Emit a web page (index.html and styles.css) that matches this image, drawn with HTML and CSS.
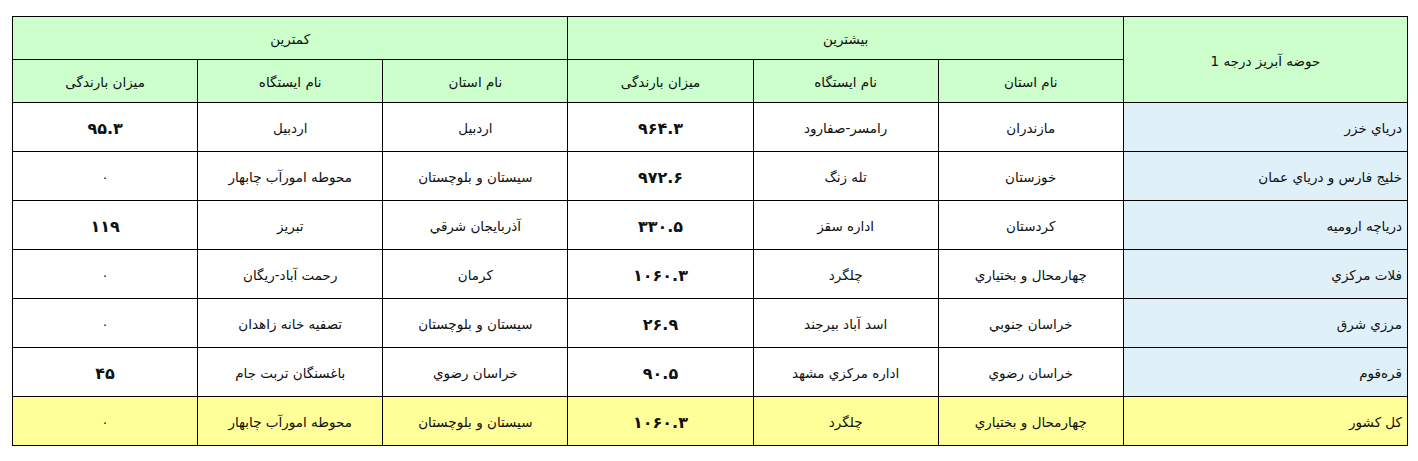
FILE: index.html
```html
<!DOCTYPE html>
<html lang="fa" dir="rtl">
<head>
<meta charset="utf-8">
<title>بارندگی</title>
<link rel="stylesheet" href="styles.css">
</head>
<body>
<table class="rain">
  <colgroup>
    <col class="c-basin">
    <col class="c-std"><col class="c-std"><col class="c-std">
    <col class="c-std"><col class="c-std"><col class="c-std">
  </colgroup>
  <thead>
    <tr class="h1">
      <th rowspan="2" class="basin-head">حوضه آبریز درجه 1</th>
      <th colspan="3">بیشترین</th>
      <th colspan="3">کمترین</th>
    </tr>
    <tr class="h2">
      <th>نام استان</th>
      <th>نام ایستگاه</th>
      <th>میزان بارندگی</th>
      <th>نام استان</th>
      <th>نام ایستگاه</th>
      <th>میزان بارندگی</th>
    </tr>
  </thead>
  <tbody>
    <tr>
      <td class="basin">درياي خزر</td>
      <td>مازندران</td><td>رامسر-صفارود</td><td class="num">۹۶۴.۳</td>
      <td>اردبیل</td><td>اردبیل</td><td class="num">۹۵.۳</td>
    </tr>
    <tr>
      <td class="basin">خلیج فارس و درياي عمان</td>
      <td>خوزستان</td><td>تله زنگ</td><td class="num">۹۷۲.۶</td>
      <td>سیستان و بلوچستان</td><td>محوطه امورآب چابهار</td><td class="zero">۰</td>
    </tr>
    <tr>
      <td class="basin">درياچه ارومیه</td>
      <td>کردستان</td><td>اداره سقز</td><td class="num">۳۳۰.۵</td>
      <td>آذربایجان شرقي</td><td>تبریز</td><td class="num">۱۱۹</td>
    </tr>
    <tr>
      <td class="basin">فلات مرکزي</td>
      <td>چهارمحال و بختیاري</td><td>چلگرد</td><td class="num">۱۰۶۰.۳</td>
      <td>کرمان</td><td>رحمت آباد-ریگان</td><td class="zero">۰</td>
    </tr>
    <tr>
      <td class="basin">مرزي شرق</td>
      <td>خراسان جنوبي</td><td>اسد آباد بیرجند</td><td class="num">۲۶.۹</td>
      <td>سیستان و بلوچستان</td><td>تصفیه خانه زاهدان</td><td class="zero">۰</td>
    </tr>
    <tr>
      <td class="basin">قره‌قوم</td>
      <td>خراسان رضوي</td><td>اداره مرکزي مشهد</td><td class="num">۹۰.۵</td>
      <td>خراسان رضوي</td><td>باغسنگان تربت جام</td><td class="num">۴۵</td>
    </tr>
    <tr class="total">
      <td class="basin">کل کشور</td>
      <td>چهارمحال و بختیاري</td><td>چلگرد</td><td class="num">۱۰۶۰.۳</td>
      <td>سیستان و بلوچستان</td><td>محوطه امورآب چابهار</td><td class="zero">۰</td>
    </tr>
  </tbody>
</table>
</body>
</html>
```

FILE: styles.css
```css
html, body {
  margin: 0;
  padding: 0;
  background: #ffffff;
}

body {
  padding: 16px 0 0 12px;
  direction: ltr;
}

.rain {
  direction: rtl;
  border-collapse: collapse;
  table-layout: fixed;
  width: 1396px;
  font-family: "DejaVu Sans", "Noto Sans", sans-serif;
  font-size: 13.5px;
  color: #111111;
}

.c-basin { width: 284px; }
.c-std { width: 185px; }

.rain th,
.rain td {
  border: 1px solid #000000;
  text-align: center;
  vertical-align: middle;
  padding: 2px 4px 0;
  font-weight: normal;
}

.rain th {
  background: #ccffcc;
  height: 40px;
}

.rain td {
  height: 46px;
  background: #ffffff;
}

.rain td.basin {
  text-align: right;
  background: #dff0f9;
  padding-right: 5px;
}

.rain td.num {
  font-weight: bold;
  font-size: 16px;
  letter-spacing: 1px;
}

.rain td.zero {
  font-size: 13px;
}

.rain tr.total td,
.rain tr.total td.basin {
  background: #ffff99;
}
```
